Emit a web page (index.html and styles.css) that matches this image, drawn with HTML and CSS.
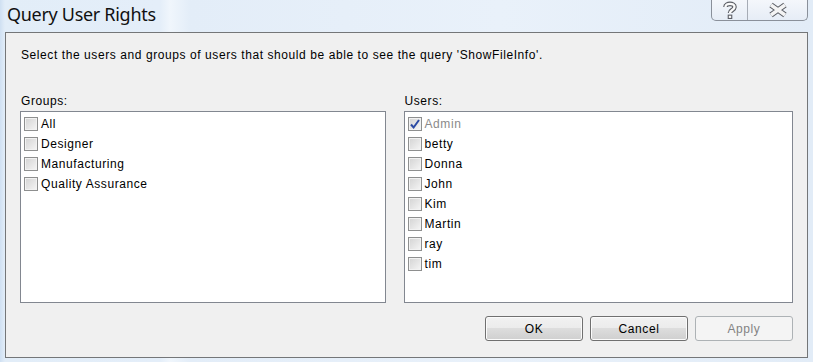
FILE: index.html
```html
<!DOCTYPE html>
<html lang="en">
<head>
    <meta charset="UTF-8">
    <title>Query User Rights</title>
    <link rel="stylesheet" href="styles.css">
</head>
<body>
    <div class="window">
        <div class="titlebar">
            <div class="title">Query User Rights</div>
            <div class="caption-buttons">
                <div class="cap-btn help-btn">
                    <svg width="16" height="19" viewBox="0 0 16 19">
                        <path d="M3.5 6 C3.5 1.8 12.5 1.8 12.5 6 C12.5 9 8 9 8 12" fill="none" stroke="#5c5f66" stroke-width="4.6"/>
                        <path d="M3.5 6 C3.5 1.8 12.5 1.8 12.5 6 C12.5 9 8 9 8 12" fill="none" stroke="#fafafa" stroke-width="2.4"/>
                        <rect x="5.7" y="13.6" width="4.6" height="4.4" fill="#5c5f66"/>
                        <rect x="6.8" y="14.7" width="2.4" height="2.2" fill="#fafafa"/>
                    </svg>
                </div>
                <div class="cap-btn close-btn">
                    <svg width="22" height="16" viewBox="0 0 22 16">
                        <path d="M4 3 L18 13 M18 3 L4 13" fill="none" stroke="#5c5f66" stroke-width="5.6"/>
                        <path d="M4 3 L18 13 M18 3 L4 13" fill="none" stroke="#f4f4f4" stroke-width="3.4"/>
                    </svg>
                </div>
            </div>
        </div>

        <div class="client">
            <p class="intro">Select the users and groups of users that should be able to see the query 'ShowFileInfo'.</p>

            <div class="lists">
                <div class="list-col groups-col">
                    <div class="list-label">Groups:</div>
                    <div class="listbox">
                        <div class="item"><span class="check"></span>All</div>
                        <div class="item"><span class="check"></span>Designer</div>
                        <div class="item"><span class="check"></span>Manufacturing</div>
                        <div class="item"><span class="check"></span>Quality Assurance</div>
                    </div>
                </div>
                <div class="list-col users-col">
                    <div class="list-label">Users:</div>
                    <div class="listbox">
                        <div class="item disabled">
                            <span class="check checked">
                                <svg width="12" height="12" viewBox="0 0 12 12">
                                    <path d="M2 6.5 L4.6 9.5 L10 2" fill="none" stroke="#2b4aa3" stroke-width="2"/>
                                </svg>
                            </span>Admin
                        </div>
                        <div class="item"><span class="check"></span>betty</div>
                        <div class="item"><span class="check"></span>Donna</div>
                        <div class="item"><span class="check"></span>John</div>
                        <div class="item"><span class="check"></span>Kim</div>
                        <div class="item"><span class="check"></span>Martin</div>
                        <div class="item"><span class="check"></span>ray</div>
                        <div class="item"><span class="check"></span>tim</div>
                    </div>
                </div>
            </div>

            <div class="buttons">
                <button class="btn">OK</button>
                <button class="btn">Cancel</button>
                <button class="btn" disabled>Apply</button>
            </div>
        </div>
    </div>
</body>
</html>
```

FILE: styles.css
```css
* {
    margin: 0;
    padding: 0;
    box-sizing: border-box;
}
body {
    width: 813px;
    height: 362px;
    overflow: hidden;
    background: linear-gradient(to right, #cfe0f2 0, #dbe8f6 3px, #e2edf8 5px, #e4eef9 160px, #f0f6fc 170px, #e3edf8 190px, #e9f1fa 500px, #e2ecf7 813px);
    font-family: "Liberation Sans", Arial, sans-serif;
    font-size: 12px;
    letter-spacing: 0.58px;
    color: #000;
}
.window {
    display: flex;
    flex-direction: column;
    padding: 0 5px 0 5px;
}
.titlebar {
    height: 32px;
    display: flex;
    justify-content: space-between;
    align-items: flex-start;
}
.title {
    font-family: "Noto Sans", "Open Sans", sans-serif;
    font-size: 18px;
    color: #111;
    padding: 2px 0 0 2px;
    letter-spacing: -0.3px;
}
.caption-buttons {
    display: flex;
    height: 21px;
    border: 1px solid #8a909a;
    border-top: none;
    border-radius: 0 0 5px 5px;
    overflow: hidden;
    background: linear-gradient(to bottom, #f4f7fb, #e6edf6);
}
.cap-btn {
    display: flex;
    align-items: center;
    justify-content: center;
}
.help-btn {
    width: 36px;
    border-right: 1px solid #a6acb5;
}
.close-btn {
    width: 59px;
}
.client {
    height: 326px;
    border: 1px solid #747678;
    background: #f0f0f0;
    padding: 0 14px;
    display: flex;
    flex-direction: column;
}
.intro {
    margin-top: 15px;
    padding-left: 1px;
    line-height: 14px;
}
.lists {
    display: flex;
    gap: 18px;
    margin-top: 32px;
}
.list-col {
    display: flex;
    flex-direction: column;
}
.groups-col {
    width: 366px;
}
.users-col {
    width: 390px;
}
.list-label {
    padding-left: 1px;
    line-height: 14px;
    margin-bottom: 3px;
}
.listbox {
    height: 192px;
    background: #fff;
    border: 1px solid #828790;
    padding: 2px 0 0 3px;
}
.item {
    height: 20px;
    display: flex;
    align-items: center;
}
.check {
    width: 14px;
    height: 14px;
    border: 1px solid #8e8f8f;
    background: linear-gradient(135deg, #d3d3d3, #f6f6f6);
    box-shadow: inset 0 0 0 1px #f2f2f2;
    margin-right: 3px;
    display: flex;
    align-items: center;
    justify-content: center;
}
.disabled {
    color: #8a8a8a;
}
.buttons {
    display: flex;
    justify-content: flex-end;
    gap: 7px;
    margin-top: 13px;
}
.btn {
    width: 98px;
    height: 25px;
    font-family: "Liberation Sans", Arial, sans-serif;
    font-size: 12px;
    letter-spacing: 0.58px;
    color: #000;
    border: 1px solid #707070;
    border-radius: 3px;
    background: linear-gradient(to bottom, #f2f2f2 0, #ebebeb 50%, #dddddd 50%, #cfcfcf 100%);
    box-shadow: inset 0 0 0 1px #fbfbfb;
}
.btn:disabled {
    color: #838383;
    border-color: #adb2b5;
    background: #f4f4f4;
    box-shadow: none;
}
```
